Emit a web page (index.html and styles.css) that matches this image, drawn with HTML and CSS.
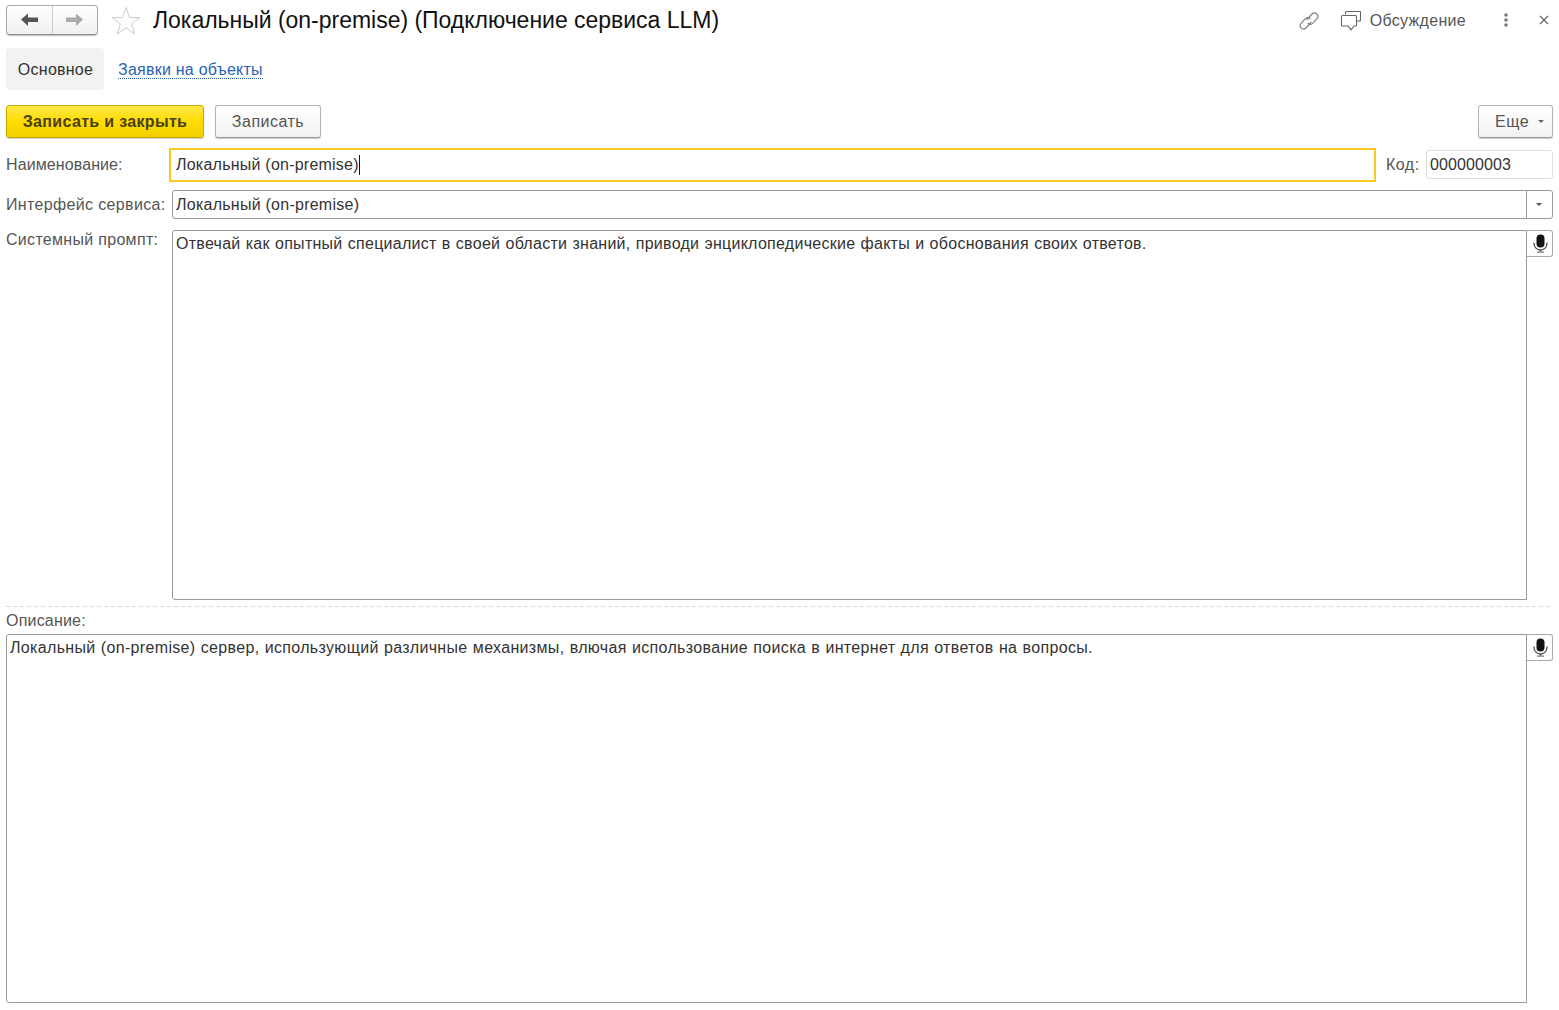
FILE: index.html
```html
<!DOCTYPE html>
<html lang="ru">
<head>
<meta charset="utf-8">
<title>Локальный (on-premise)</title>
<link rel="stylesheet" href="styles.css">
</head>
<body>
<div class="page">
  <header class="head">
    <div class="nav">
      <button class="nav-btn nav-back"><svg width="20" height="14" viewBox="0 0 20 14"><path d="M1 6.500 8 0.500V4.500h10v4.500H8v4z" fill="#555"/></svg></button>
      <button class="nav-btn nav-next"><svg width="20" height="14" viewBox="0 0 20 14"><path d="M19 6.500 12 0.500V4.500H2v4.500h10v4z" fill="#aaa"/></svg></button>
    </div>
    <svg class="star" width="30" height="30" viewBox="0 0 30 30"><path d="M15 1.500 18.600 11.500H29L20.600 17.800 23.700 28 15 21.800 6.300 28 9.400 17.800 1 11.500H11.400z" fill="none" stroke="#c9ccd0" stroke-width="1"/></svg>
    <h1 class="title">Локальный (on-premise) (Подключение сервиса LLM)</h1>
    <div class="head-tools">
      <svg class="ico-link" width="22" height="22" viewBox="0 0 22 22"><g fill="none" stroke="#808080" stroke-width="1.200" stroke-linecap="round"><path d="M9 9.500 14 4a3.400 3.400 0 0 1 5 4.600l-4.400 4.700a3.400 3.400 0 0 1-4.600.2"/><path d="M13 12.500 8 18a3.400 3.400 0 0 1-5-4.600l4.400-4.700a3.400 3.400 0 0 1 4.600-.2"/></g></svg>
      <svg class="ico-chat" width="22" height="21" viewBox="0 0 22 21"><g fill="none" stroke="#666" stroke-width="1.100" stroke-linejoin="round"><path d="M5.500 4.500V2.500a1 1 0 0 1 1-1H20a.5.5 0 0 1 .5.500V10a1 1 0 0 1-1 1H17"/><path d="M2.500 5.500H15.500a1 1 0 0 1 1 1V15a1 1 0 0 1-1 1H14L11 19.800 8 16H2.500a1 1 0 0 1-1-1V6.500a1 1 0 0 1 1-1z" fill="#fff"/></g></svg>
      <span class="discuss">Обсуждение</span>
      <svg class="ico-more" width="6" height="16" viewBox="0 0 6 16"><g fill="#777"><circle cx="3" cy="3" r="1.800"/><circle cx="3" cy="8" r="1.800"/><circle cx="3" cy="13" r="1.800"/></g></svg>
      <svg class="ico-close" width="10" height="10" viewBox="0 0 10 10"><path d="M1 1 9 9M9 1 1 9" stroke="#666" stroke-width="1.200"/></svg>
    </div>
  </header>

  <nav class="tabs">
    <span class="tab tab-active">Основное</span>
    <a class="tab-link">Заявки на объекты</a>
  </nav>

  <div class="toolbar">
    <button class="btn btn-primary">Записать и закрыть</button>
    <button class="btn btn-save">Записать</button>
    <button class="btn btn-more">Еще<span class="caret"></span></button>
  </div>

  <div class="row row-name">
    <label class="lbl lbl-name">Наименование:</label>
    <div class="field-focus"><span>Локальный (on-premise)</span><i class="cursor"></i></div>
    <label class="lbl lbl-code">Код:</label>
    <div class="field-code">000000003</div>
  </div>

  <div class="row row-iface">
    <label class="lbl lbl-iface">Интерфейс сервиса:</label>
    <div class="field-select">
      <span class="select-val">Локальный (on-premise)</span>
      <span class="select-btn"><span class="caret caret-dark"></span></span>
    </div>
  </div>

  <div class="row row-prompt">
    <label class="lbl lbl-top">Системный промпт:</label>
    <div class="area-wrap">
      <div class="area area-prompt">Отвечай как опытный специалист в своей области знаний, приводи энциклопедические факты и обоснования своих ответов.</div>
      <span class="mic"><svg width="15" height="19" viewBox="0 0 15 19"><rect x="3.500" y="0.500" width="8" height="13" rx="4" fill="#111"/><path d="M1 8.500v1a6.500 6.500 0 0 0 13 0v-1" fill="none" stroke="#444" stroke-width="1.200"/><rect x="6.500" y="15.500" width="2" height="2" fill="#555"/><rect x="4" y="17.500" width="7" height="1.200" fill="#777"/></svg></span>
    </div>
  </div>

  <div class="sep"></div>
  <label class="lbl lbl-desc">Описание:</label>
  <div class="area-wrap">
    <div class="area area-desc">Локальный (on-premise) сервер, использующий различные механизмы, влючая использование поиска в интернет для ответов на вопросы.</div>
    <span class="mic"><svg width="15" height="19" viewBox="0 0 15 19"><rect x="3.500" y="0.500" width="8" height="13" rx="4" fill="#111"/><path d="M1 8.500v1a6.500 6.500 0 0 0 13 0v-1" fill="none" stroke="#444" stroke-width="1.200"/><rect x="6.500" y="15.500" width="2" height="2" fill="#555"/><rect x="4" y="17.500" width="7" height="1.200" fill="#777"/></svg></span>
  </div>
</div>
</body>
</html>
```
FILE: styles.css
```css
* { box-sizing: border-box; }
html, body { margin: 0; background: #fff; }
body { font-family: "Liberation Sans", Arial, sans-serif; font-size: 16px; color: #333; line-height: 18px; letter-spacing: 0.3px; }
.page { padding: 5px 6px 0; height: 1010px; overflow: hidden; }

.head { display: flex; align-items: center; height: 30px; }
.nav { display: flex; width: 92px; height: 30px; border: 1px solid #aaa; border-bottom-color: #8f8f8f; border-radius: 4px; background: linear-gradient(#fff, #f1f1f1); box-shadow: 0 1px 1px #bbb; }
.nav-btn { padding: 0; border: 0; background: none; display: flex; align-items: center; justify-content: center; }
.nav-back { width: 46px; padding-left: 1px; border-right: 1px solid #ccc; }
.nav-next { flex: 1; padding-right: 2px; }
.star { margin-left: 13px; margin-top: 1px; flex: none; }
.title { margin: 0 0 0 12px; font-size: 23px; font-weight: 400; color: #111; line-height: 30px; white-space: nowrap; letter-spacing: -0.02px; }
.head-tools { margin-left: auto; display: flex; align-items: center; height: 30px; }
.ico-link { margin-right: 20px; margin-top: 2px; }
.ico-chat { margin-right: 8px; margin-top: 1px; }
.discuss { color: #555; padding-top: 1px; }
.ico-more { margin-left: 37px; }
.ico-close { margin-left: 30px; margin-right: 4px; }

.tabs { display: flex; align-items: center; margin-top: 13px; height: 42px; }
.tab { display: flex; align-items: center; justify-content: center; height: 42px; padding-top: 1px; }
.tab-active { width: 98px; padding-left: 1px; background: #f2f2f2; border-radius: 4px; letter-spacing: 0.25px; }
.tab-link { margin-left: 14px; margin-top: 1px; color: #2a62b4; border-bottom: 1px dotted #1f5fb4; line-height: 17px; letter-spacing: 0.24px; }

.toolbar { display: flex; margin-top: 15px; height: 33px; }
.btn { font: inherit; letter-spacing: inherit; color: #555; padding: 0; width: 106px; height: 33px; border: 1px solid #b5b5b5; border-bottom-color: #999; border-radius: 3px; background: linear-gradient(#fff, #f2f2f2); box-shadow: 0 1px 1px #ccc; margin-left: 11px; }
.btn-save { letter-spacing: 0.5px; }
.btn-primary { width: 198px; margin-left: 0; font-weight: 700; letter-spacing: 0.33px; color: #4a4010; background: linear-gradient(#ffe84a, #ffdc00 50%, #f0cf00); border-color: #c9a800; }
.btn-more { width: 75px; margin-left: auto; display: flex; align-items: center; justify-content: flex-start; padding-left: 16px; letter-spacing: 0.6px; }
.caret { display: inline-block; width: 0; height: 0; border: 3px solid transparent; border-top: 3px solid #666; border-bottom: 0; margin-left: 9px; }
.caret-dark { margin: 0 1px 0 0; border-width: 3.500px; border-top-color: #555; border-bottom: 0; }

.row { display: flex; }
.lbl { color: #555; white-space: nowrap; }
.row-name { margin-top: 10px; height: 34px; align-items: center; }
.lbl-name { width: 163px; letter-spacing: 0.1px; }
.field-focus { display: flex; align-items: center; flex: 1; height: 34px; border: 2px solid #fbc91f; padding-left: 5px; letter-spacing: 0.23px; }
.cursor { display: block; width: 1px; height: 20px; background: #111; }
.lbl-code { margin-left: 10px; width: 40px; letter-spacing: 0.5px; }
.field-code { width: 127px; height: 29px; border: 1px solid #ddd; border-radius: 3px; padding: 5px 3px 3px; margin-bottom: 1px; letter-spacing: 0.1px; }
.row-iface { margin-top: 8px; height: 29px; align-items: center; }
.lbl-iface { letter-spacing: 0.35px; }
.row-iface .lbl, .row-prompt .lbl { width: 166px; }
.field-select { flex: 1; height: 29px; display: flex; border: 1px solid #999; border-radius: 3px; }
.select-val { flex: 1; padding: 5px 3px 3px; letter-spacing: 0.25px; }
.select-btn { width: 26px; border-left: 1px solid #999; display: flex; align-items: center; justify-content: center; }
.row-prompt { margin-top: 11px; }
.lbl-top { padding-top: 0; margin-top: 1px; }
.area-wrap { display: flex; flex: 1; align-items: flex-start; }
.area { border: 1px solid #999; border-radius: 3px 0 0 3px; padding: 4px 3px 3px; flex: 1; word-spacing: 0.5px; }
.area-prompt { height: 370px; letter-spacing: 0.27px; }
.area-desc { height: 369px; letter-spacing: 0.33px; }
.mic { flex: none; width: 26px; height: 27px; padding-left: 1px; display: flex; align-items: center; justify-content: center; border: 1px solid #aaa; border-left: 0; border-radius: 0 3px 3px 0; }
.sep { margin-top: 6px; height: 1px; background: repeating-linear-gradient(90deg, #d9d9d9 0 4px, transparent 4px 7px); }
.lbl-desc { display: block; margin-top: 4px; height: 23px; padding-top: 1px; letter-spacing: 0.2px; }
```
